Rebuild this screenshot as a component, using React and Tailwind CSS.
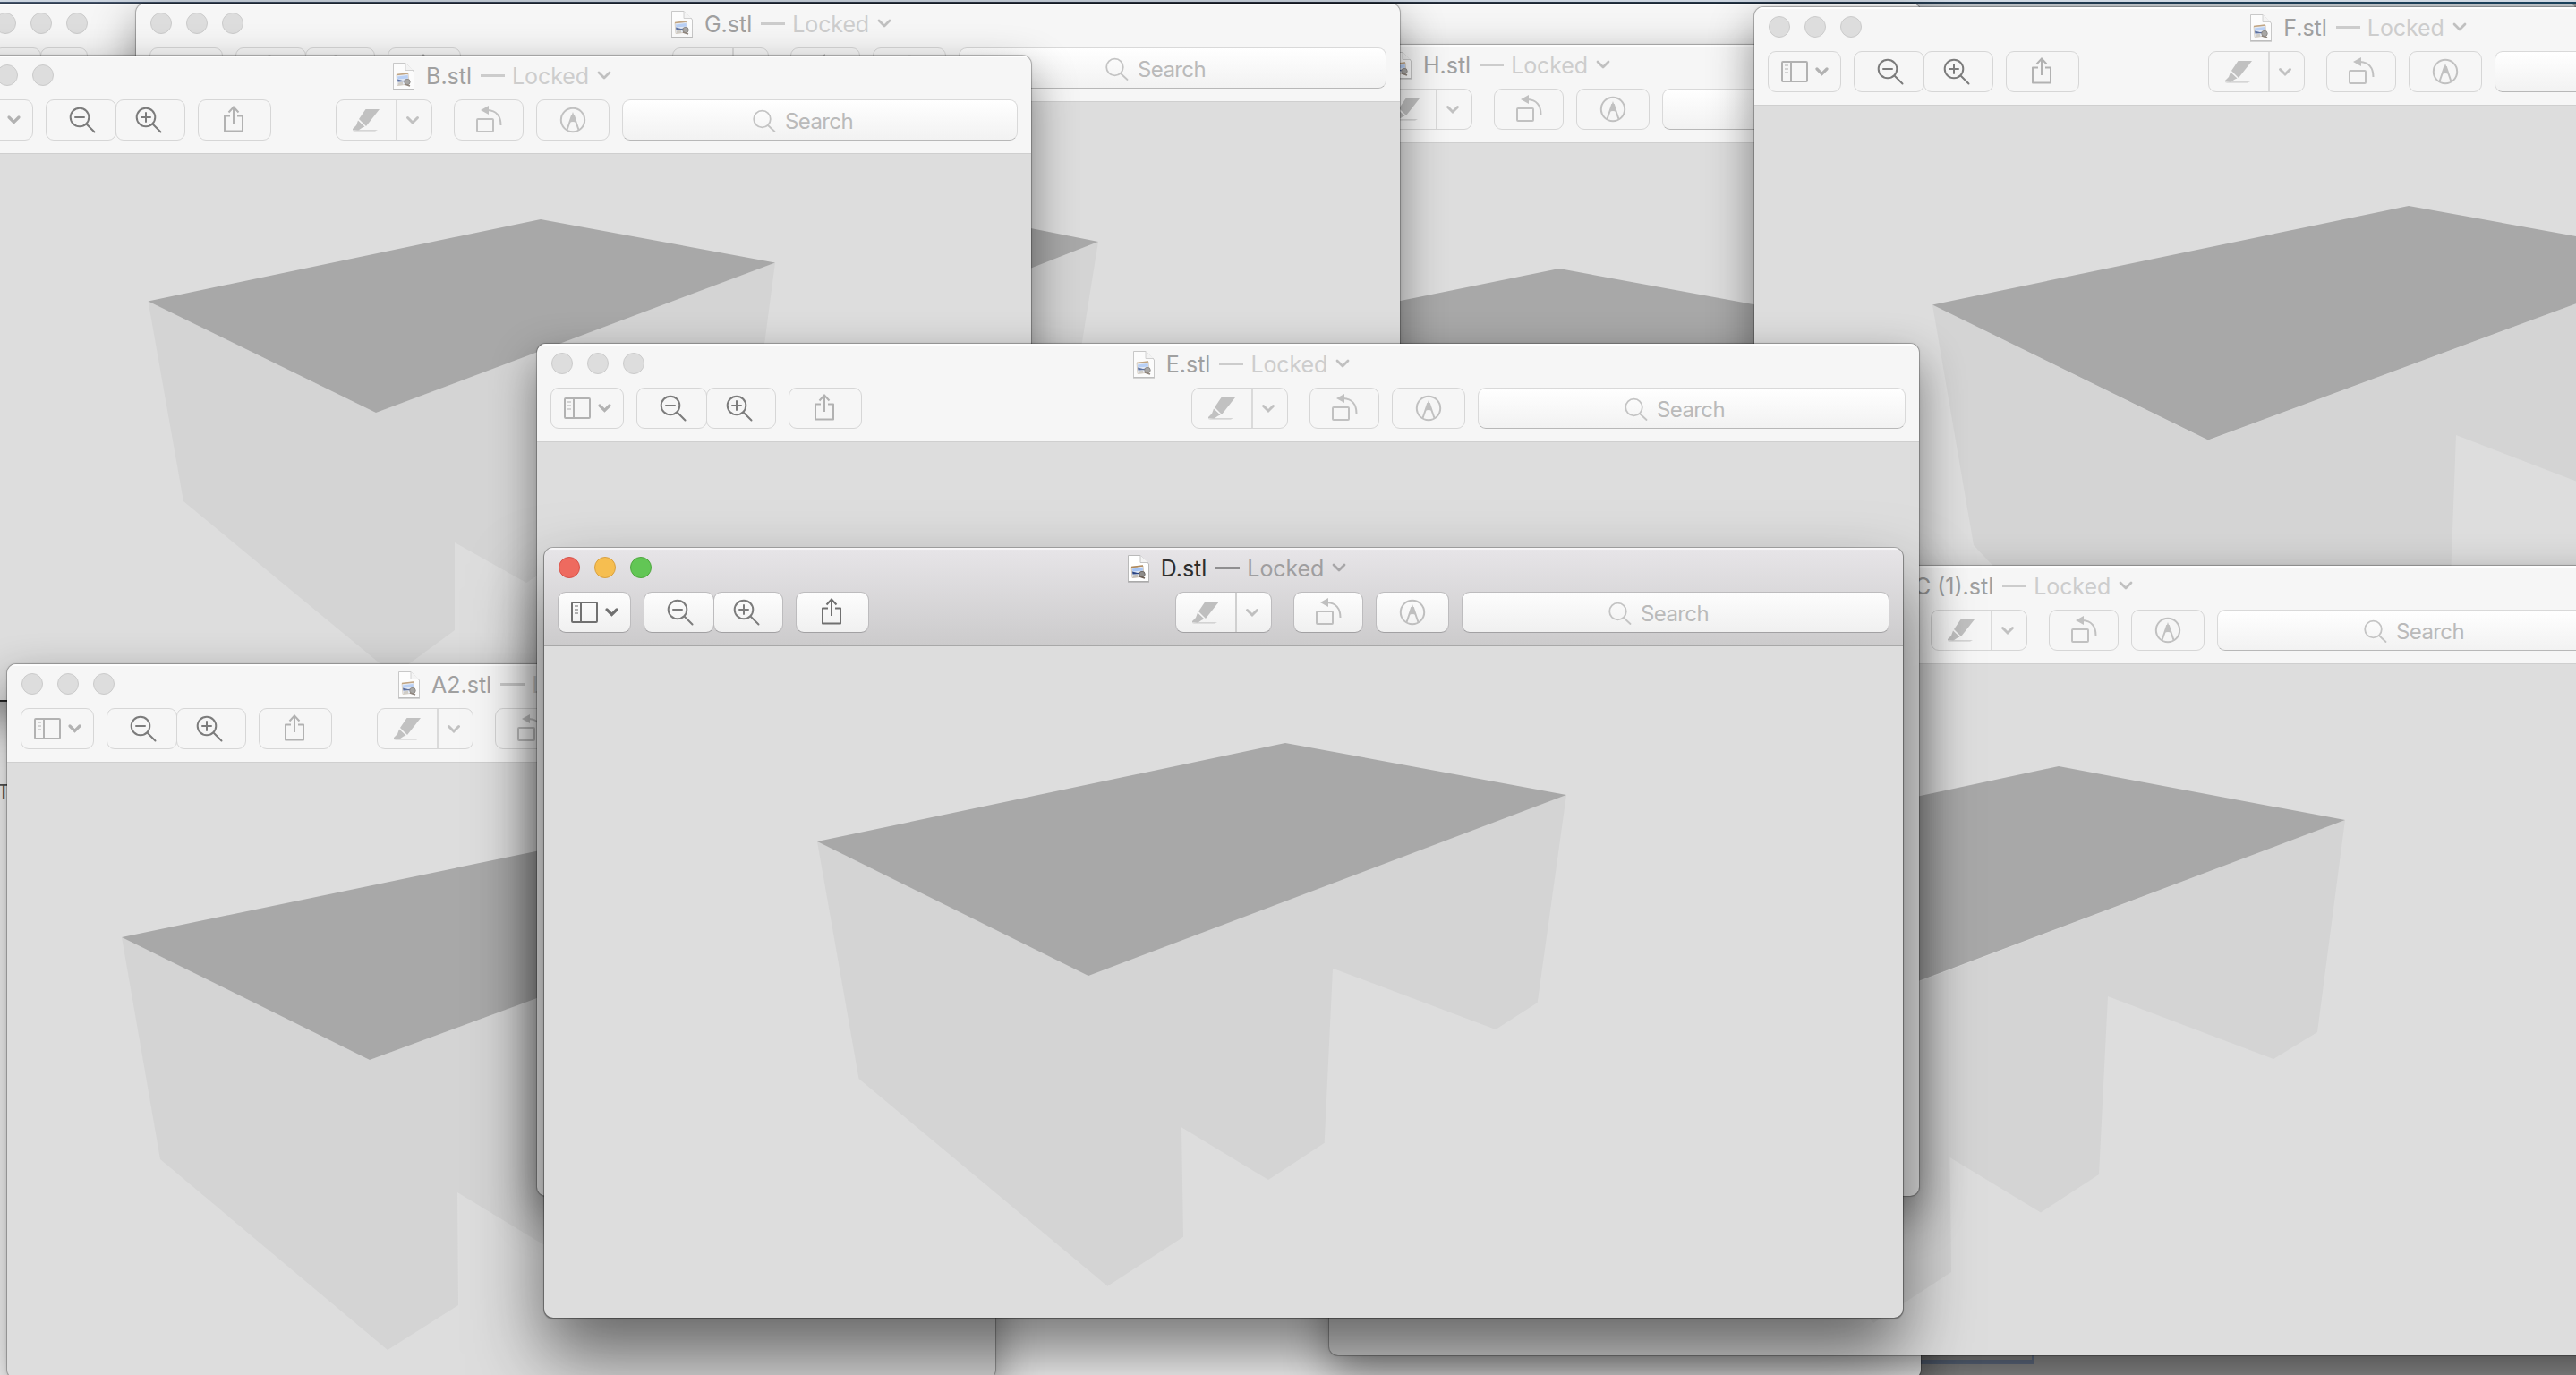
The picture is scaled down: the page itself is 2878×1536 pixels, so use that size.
import React from "react";

const WINDOWS = [
  {
    name: "H.stl", x: 972, y: 50, w: 1378, h: 700,
    side: "1500,420 1960,420 1960,700 1500,700",
    top: "1500,349 1742,300 1986,345 1986,420 1500,420",
  },
  {
    name: "G.stl", x: 152, y: 4, w: 1412, h: 700,
    side: "1100,320 1227,270 1208,388 1204,420 1100,420",
    top: "900,205 1227,270 1100,320",
  },
  {
    name: "B.stl", x: -60, y: 62, w: 1212, h: 720, search: 442,
    side: "165.5,336.5 420,461 866,293.5 848,430 647,455 640,617 588,651 508,606 508,704 440,754 205,560",
    top: "165.5,336.5 604,245 866,293.5 420,461",
  },
  {
    name: "F.stl", x: 1960, y: 8, w: 1320, h: 800,
    side: "2159,340.5 2467,492 2900,331 2900,546 2744,486 2736,700 2290,700 2205,609",
    top: "2159,340.5 2691,230 2900,268 2900,331 2467,491.5",
  },
  {
    name: "C (1).stl", x: 1485, y: 632, w: 1485, h: 882,
    side: "1950,1170 2620,916 2589,1153 2540,1183 2355,1113 2345,1312 2280,1354.5 2178.5,1293 2180,1421 2093,1478 1950,1300",
    top: "2000,920 2300,856 2620,916 2000,1150",
  },
  {
    name: "A2.stl", x: 8, y: 742, w: 1104, h: 798, search: 356,
    side: "136,1047 413,1184 700,1078 700,1440 600,1386 511,1332 512,1458 433,1508 179,1295",
    top: "136,1047 700,930 700,1078 413,1184",
  },
  { name: "E.stl", x: 600, y: 384, w: 1544, h: 952 },
  {
    name: "D.stl", x: 608, y: 612, w: 1518, h: 860, active: true,
    side: "913,940 1216,1089 1750,888 1717.7,1120 1671,1150 1489,1081.7 1479.7,1276.8 1417,1318 1320,1259.3 1322,1381.7 1237.3,1436.8 959.5,1205",
    top: "913,940 1436,830 1750,888 1216,1090",
  },
];

function Light({ active, tone }) {
  const tones = {
    red: "bg-[#ee6a5f] border-[#d5524a]",
    yellow: "bg-[#f6be50] border-[#d8a040]",
    green: "bg-[#62c655] border-[#4fa73f]",
  };
  return (
    <span
      className={
        "block size-6 rounded-full border " +
        (active ? tones[tone] : "bg-[#dddddd] border-[#cbcbcb]")
      }
    />
  );
}

function Button({ active, w, className = "", children }) {
  return (
    <div
      className={
        "h-[46px] shrink-0 rounded-[9px] border " +
        (active
          ? "border-[#bdbcbe] border-b-[#a2a1a3] bg-linear-to-b from-[#fdfdfd] to-[#f0f0f0] bg-clip-padding "
          : "border-[#d6d6d6] ") +
        className
      }
      style={{ width: w }}
    >
      <svg
        viewBox={`0 0 ${w} 46`}
        width={w}
        height="46"
        className="-m-px block max-w-none"
        fill="none"
        stroke="currentColor"
        strokeWidth="2"
      >
        {children}
      </svg>
    </div>
  );
}

function DocIcon({ active }) {
  return (
    <svg viewBox="0 0 26 32" className={"h-8 w-[26px] shrink-0 " + (active ? "" : "opacity-75")}>
      <path d="M1.5 1.5H15L24.5 11V30.5H1.5Z" fill="#fff" stroke="#b9b9b9" />
      <path d="M1 31H25" stroke="#9a9a9a" />
      <path d="M15 1.5V9.500H24" fill="#f3f3f3" stroke="#c4c4c4" />
      <path d="M5 14.500L18 13L19 25L6 26.500Z" fill="#dfe6f2" stroke="#c9bba8" strokeWidth=".8" />
      <path d="M5 14.500L18 13" stroke="#b08a5c" strokeWidth="1.600" />
      <path d="M6 16.500L17.500 15L18 18.500L6.500 19.500Z" fill="#a5c4f5" />
      <path d="M6 19.500L12 21L18.500 20V22L6.500 22.500Z" fill="#2c4684" />
      <path d="M7 23.500L12 22.500V26L7 26.500Z" fill="#c4c0b8" />
      <circle cx="17" cy="22.500" r="3.200" fill="#8f8d8b" stroke="#6e6a66" />
      <path d="M14 25L20 27" stroke="#6f6257" strokeWidth="1.800" />
    </svg>
  );
}

function Title({ name, active }) {
  return (
    <div className="mt-px flex h-[23px] flex-1 items-center justify-center pr-[91px]">
      <DocIcon active={active} />
      <span
        className={
          "ml-3 text-[25px] leading-8 " +
          (active ? "text-[#2e2e2e]" : "text-[#a0a0a0]")
        }
      >
        {name}
      </span>
      <span
        className={
          "mr-[8px] ml-[10px] h-[2.5px] w-[27px] shrink-0 " +
          (active ? "bg-[#8f8e90]" : "bg-[#cccccc]")
        }
      />
      <span
        className={
          "text-[25px] leading-8 tracking-[-0.1px] " +
          (active ? "text-[#9f9ea0]" : "text-[#cdcdcd]")
        }
      >
        Locked
      </span>
      <svg
        viewBox="0 0 16 12"
        className={"ml-[9px] h-3 w-4 shrink-0 " + (active ? "text-[#a7a6a8]" : "text-[#c0c0c0]")}
        fill="none"
        stroke="currentColor"
        strokeWidth="2.800"
        strokeLinecap="round"
        strokeLinejoin="round"
      >
        <path d="M2 2L8 8L14 2" />
      </svg>
    </div>
  );
}

function Toolbar({ active, search }) {
  const main = active ? "text-[#707070]" : "text-[#b2b2b2]";
  const dim = active ? "text-[#bfbfbf]" : "text-[#c1c1c1]";
  return (
    <div className="flex h-[46px] px-[15px]">
      <Button active={active} w={82} className={main}>
        <rect x="16" y="12" width="28" height="22" rx="1" />
        <path d="M26 12V34" />
        <path d="M19 16H23M19 20H23M19 24H23" strokeWidth="1.600" opacity=".7" />
        <path d="M55 20L60.500 25.500L66 20" strokeWidth="3.200" strokeLinecap="round" />
      </Button>
      <Button active={active} w={79} className="ml-[14px] text-[#7c7c7c]">
        <circle cx="38" cy="20" r="10.300" />
        <path d="M33 20H43M45.500 27.500L54.500 36.500" strokeLinecap="round" />
      </Button>
      <Button active={active} w={78} className="-ml-px text-[#7c7c7c]">
        <circle cx="34" cy="20" r="10.300" />
        <path d="M29 20H39M34 15V25M41.500 27.500L50.500 36.500" strokeLinecap="round" />
      </Button>
      <Button active={active} w={82} className={"ml-[14px] " + main}>
        <path d="M36 18.500H30V35.500H50V18.500H44" strokeLinejoin="round" />
        <path d="M40 27V9M34.500 14.500L40 8.500L45.500 14.500" />
      </Button>
      <div className="flex-1" />
      <Button active={active} w={108} className={dim}>
        <path d="M33.500 11H49L34 30L26 22Z" fill="currentColor" stroke="none" />
        <path d="M25 23.500L32.500 30.500L30 31.500L25.500 34.500H19V33L23 29Z" fill="currentColor" stroke="none" />
        <path d="M24 34.200H47L44 35.500H19Z" fill="currentColor" stroke="none" opacity=".8" />
        <path d="M68 1V45" stroke={active ? "#d0d0d0" : "#dadada"} />
        <path d="M80.500 20.500L86 26L91.500 20.500" strokeWidth="3" strokeLinecap="round" />
      </Button>
      <Button active={active} w={78} className={"ml-6 " + dim}>
        <rect x="26" y="22" width="18" height="14" rx="1" />
        <path d="M38 12C47 12.500 52.500 18.500 52.500 29" />
        <path d="M30 12L39 7V17Z" fill="currentColor" stroke="none" />
      </Button>
      <Button active={active} w={82} className={"ml-[14px] " + dim}>
        <circle cx="41" cy="23" r="13.200" />
        <path d="M34.500 34L40 18H42L47.500 34" />
        <path d="M41 14L45 26Q41 24 37 26Z" fill="currentColor" stroke="none" />
      </Button>
      <div
        className={
          "ml-[14px] flex h-[46px] shrink-0 items-center justify-center rounded-[9px] border bg-linear-to-b bg-clip-padding pr-[38px] " +
          (active
            ? "border-[#bdbcbe] border-b-[#a2a1a3] from-[#fdfdfd] to-[#f0f0f0]"
            : "border-[#d9d9d9] border-b-[#b8b8b8] from-white to-[#f2f2f2]")
        }
        style={{ width: search }}
      >
        <svg
          viewBox="0 0 26 26"
          className="mt-px size-[26px] text-[#c4c4c4]"
          fill="none"
          stroke="currentColor"
          strokeWidth="1.800"
          strokeLinecap="round"
        >
          <circle cx="10.500" cy="11" r="9.300" />
          <path d="M17 18L24.500 25" />
        </svg>
        <span className="ml-[10px] pt-[3px] text-[24px] leading-8 tracking-[-0.6px] text-[#bababa]">
          Search
        </span>
      </div>
    </div>
  );
}

function Window({ name, x, y, w, h, side, top, active, search = 478 }) {
  return (
    <section
      className={
        "absolute flex flex-col overflow-hidden rounded-[10px] bg-[#dddddd] " +
        (active
          ? "shadow-[0_0_0_1px_rgba(0,0,0,0.22),0_1px_1px_1px_rgba(0,0,0,0.2),0_42px_80px_rgba(0,0,0,0.55)]"
          : "shadow-[0_0_0_1px_rgba(0,0,0,0.2),0_0_2px_1px_rgba(0,0,0,0.1),0_20px_50px_rgba(0,0,0,0.45)]")
      }
      style={{ left: x, top: y, width: w, height: h }}
    >
      <header
        className={
          "h-[110px] shrink-0 border-b " +
          (active
            ? "border-[#a8a8a8] bg-linear-to-b from-[#e7e5e8] to-[#cccbcc] shadow-[inset_0_2px_1px_rgba(255,255,255,0.7)]"
            : "border-[#cfcfcf] bg-[#f6f6f6] shadow-[inset_0_2px_1px_rgba(255,255,255,0.9)]")
        }
      >
        <div className="flex h-[49px] items-start pt-[10px] pl-4">
          <div className="flex gap-4">
            <Light active={active} tone="red" />
            <Light active={active} tone="yellow" />
            <Light active={active} tone="green" />
          </div>
          <Title name={name} active={active} />
        </div>
        <Toolbar active={active} search={search} />
      </header>
      {side && (
        <svg
          viewBox={`${x} ${y + 110} ${w} ${h - 110}`}
          width={w}
          height={h - 110}
          className="block shrink-0"
        >
          <polygon points={side} fill="#d4d4d4" />
          <polygon points={top} fill="#a8a8a8" />
        </svg>
      )}
    </section>
  );
}

function BackgroundWindow() {
  return (
    <section className="absolute top-[4px] left-[-22px] h-[1536px] w-[2168px] overflow-hidden rounded-[10px] bg-white shadow-[0_0_0_1px_rgba(0,0,0,0.25),0_20px_50px_rgba(0,0,0,0.45)]">
      <header className="h-[780px] border-b-2 border-[#444444] bg-[#f6f6f6] shadow-[inset_0_2px_1px_rgba(255,255,255,0.9)]">
        <div className="flex h-[49px] gap-4 pt-[10px] pl-4">
          <Light />
          <Light />
          <Light />
        </div>
        <div className="flex pl-[15px]">
          <div className="h-[46px] w-[53px] rounded-[9px] border border-[#d6d6d6]" />
          <div className="-ml-px h-[46px] w-[53px] rounded-[9px] border border-[#d6d6d6]" />
        </div>
      </header>
      <p className="mt-[89px] pl-[19px] text-[22px] leading-[22px] text-[#555555]">T</p>
    </section>
  );
}

export default function App() {
  return (
    <main className="relative h-[1536px] w-[2878px] overflow-hidden bg-[#929292] font-['Inter','Liberation_Sans',sans-serif]">
      <div className="h-[2px] bg-[#dde7f2]" />
      <div className="h-[2px] bg-linear-to-r from-[#4a5c76] via-[#2b3443] to-[#1d4763]" />
      <div className="h-8 rounded-tr-[8px] bg-[#ccd1d5]" />
      <div className="absolute top-[1500px] left-[2100px] h-[24px] w-[172px] border-r-2 border-b-[5px] border-[#65738a] bg-[#8a8a8a]" />
      <BackgroundWindow />
      {WINDOWS.map((win) => (
        <Window key={win.name} {...win} />
      ))}
    </main>
  );
}
